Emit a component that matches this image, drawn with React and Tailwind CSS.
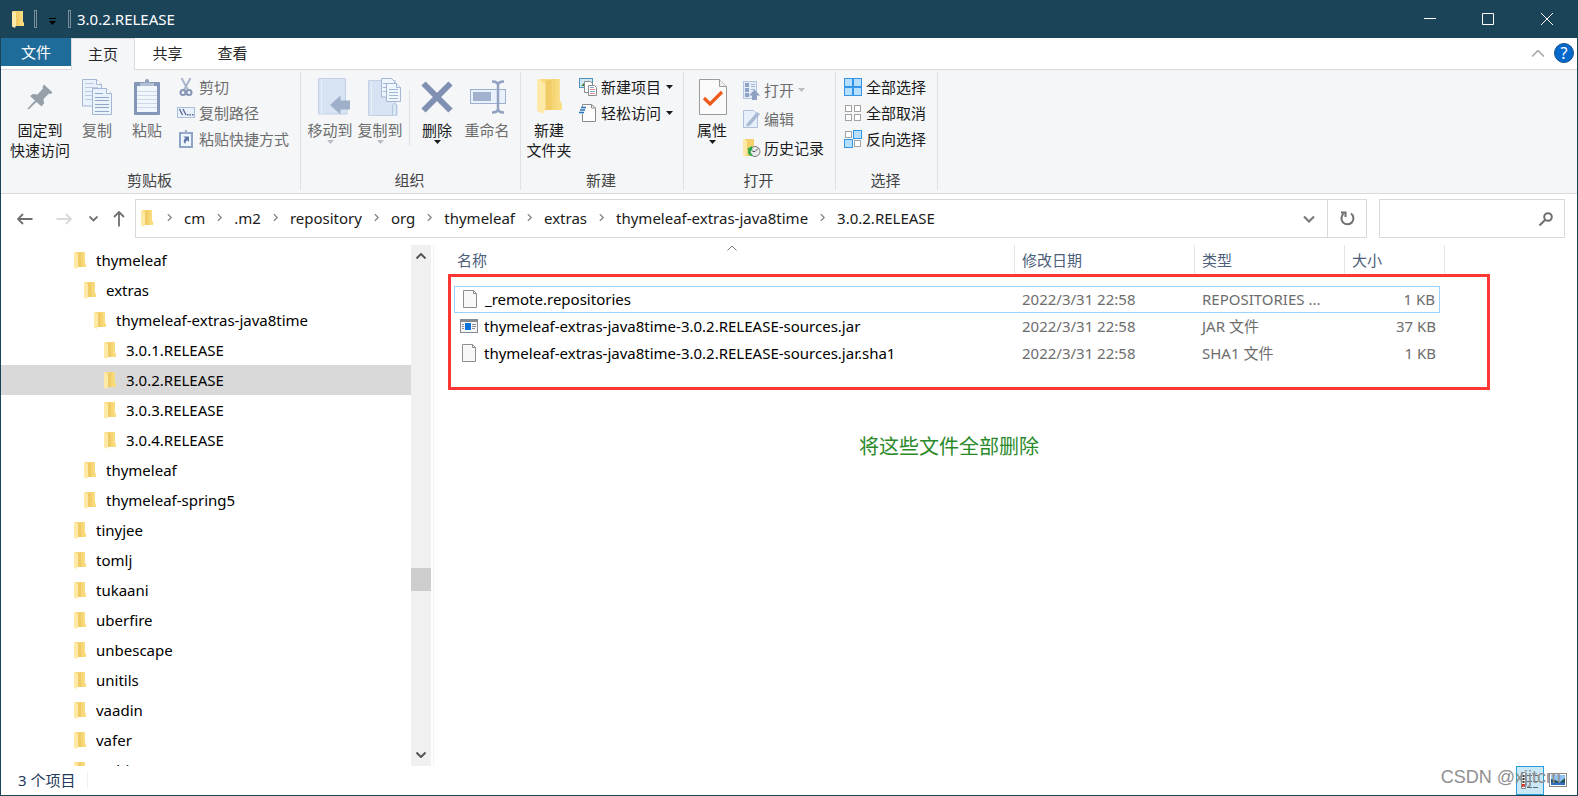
import { useState } from "react";

const TREE = [
  { name: "thymeleaf", level: 0 },
  { name: "extras", level: 1 },
  { name: "thymeleaf-extras-java8time", level: 2 },
  { name: "3.0.1.RELEASE", level: 3 },
  { name: "3.0.2.RELEASE", level: 3 },
  { name: "3.0.3.RELEASE", level: 3 },
  { name: "3.0.4.RELEASE", level: 3 },
  { name: "thymeleaf", level: 1 },
  { name: "thymeleaf-spring5", level: 1 },
  { name: "tinyjee", level: 0 },
  { name: "tomlj", level: 0 },
  { name: "tukaani", level: 0 },
  { name: "uberfire", level: 0 },
  { name: "unbescape", level: 0 },
  { name: "unitils", level: 0 },
  { name: "vaadin", level: 0 },
  { name: "vafer", level: 0 },
  { name: "webjars", level: 0 },
];

const INDENT = ["pl-[73px]", "pl-[83px]", "pl-[93px]", "pl-[103px]"];

const PATH = ["cm", ".m2", "repository", "org", "thymeleaf", "extras", "thymeleaf-extras-java8time", "3.0.2.RELEASE"];

const FILES = [
  { name: "_remote.repositories", date: "2022/3/31 22:58", type: "REPOSITORIES ...", size: "1 KB" },
  { name: "thymeleaf-extras-java8time-3.0.2.RELEASE-sources.jar", date: "2022/3/31 22:58", type: "JAR 文件", size: "37 KB", jar: true },
  { name: "thymeleaf-extras-java8time-3.0.2.RELEASE-sources.jar.sha1", date: "2022/3/31 22:58", type: "SHA1 文件", size: "1 KB" },
];

/* ---------- icons ---------- */

function FolderIcon({ className = "w-3 h-[17px]" }) {
  return (
    <svg viewBox="0 0 12 17" className={`shrink-0 ${className}`} aria-hidden="true">
      <path d="M1 0h10v10.500l1 1.500v3H3z" fill="#fadc80" />
      <path d="M4 1l4-1v15H4z" fill="#f0cb66" />
      <path d="M7 0h2v15H7z" fill="#f5d574" />
      <path d="M0 0l4 2.2v12L3 17l-3-1.6z" fill="#ffe9a6" />
    </svg>
  );
}

function Chevron({ className, d = "M1 1l4 4-4 4", viewBox = "0 0 6 10", width = 1.5 }) {
  return (
    <svg viewBox={viewBox} className={`shrink-0 ${className}`} fill="none" stroke="currentColor" strokeWidth={width} aria-hidden="true">
      <path d={d} />
    </svg>
  );
}

function Caret({ className = "" }) {
  return (
    <svg viewBox="0 0 7 4" className={`w-[7px] h-1 shrink-0 ${className}`} fill="currentColor" aria-hidden="true">
      <path d="M0 0h7L3.5 4z" />
    </svg>
  );
}

function PinIcon() {
  return (
    <svg viewBox="0 0 26 26" className="w-[26px] h-[26px]" aria-hidden="true">
      <path d="M17 .5l8.500 8-2 1.500-1.500-.5-5.500 5.500.5 4.500-2.500 3-5-4.500-8 7.500-1-1 7.500-8-5-4.500 3-2 4.500.5 5.500-6-.5-1.500z" fill="#95a0a8" />
    </svg>
  );
}

function CopyIcon() {
  return (
    <svg viewBox="0 0 30 36" className="w-[30px] h-9" fill="#eaf2fc" stroke="#a3b6d3" aria-hidden="true">
      <path d="M.5.500h14l5 5v21.500h-19z" />
      <path d="M14.500.500v5h5" fill="#fff" />
      <path d="M3 4.500h9M3 8.500h13M3 12.500h13M3 16.500h13M3 20.500h13" stroke="#bccbe2" />
      <path d="M10.500 9.500h14l5 5v21h-19z" />
      <path d="M24.500 9.500v5h5" fill="#fff" />
      <path d="M13 14.500h8M13 18.500h14M13 21.500h14M13 25.500h14M13 28.500h14M13 32.500h14" stroke="#8fa6c9" />
    </svg>
  );
}

function PasteIcon() {
  return (
    <svg viewBox="0 0 26 36" className="w-[26px] h-9" aria-hidden="true">
      <rect y="3" width="26" height="33" rx="1" fill="#8597b9" />
      <rect x="3" y="7" width="20" height="26" fill="#f1f6fd" />
      <path d="M3 12.500h20M3 16.500h20M3 20.500h20M3 24.500h20M3 28.500h20" stroke="#cdd9ea" />
      <path d="M6 7V4h4.500a2.500 2.500 0 015 0H20v3z" fill="#b3bfd2" />
      <circle cx="13" cy="2" r="2" fill="#8d9dba" />
    </svg>
  );
}

function CutIcon() {
  return (
    <svg viewBox="0 0 18 18" className="w-[18px] h-[18px] shrink-0" fill="none" aria-hidden="true">
      <path d="M4.500 0L11 12M13.500 0L7 12" stroke="#a9b6cb" strokeWidth="2" />
      <circle cx="6" cy="14.500" r="2.500" stroke="#8496b8" strokeWidth="2" />
      <circle cx="12" cy="14.500" r="2.500" stroke="#8496b8" strokeWidth="2" />
    </svg>
  );
}

function CopyPathIcon() {
  return (
    <svg viewBox="0 0 18 18" className="w-[18px] h-[18px] shrink-0" aria-hidden="true">
      <rect x=".5" y="3.500" width="17" height="10" fill="#e9f1fb" stroke="#a9bcd8" />
      <path d="M2.500 5l3 6M6 5l3 6" stroke="#54698f" strokeWidth="1.300" />
      <path d="M10 10h1.500v1.500H10zM12.500 10H14v1.500h-1.500zM15 10h1.500v1.500H15z" fill="#54698f" />
    </svg>
  );
}

function PasteShortcutIcon() {
  return (
    <svg viewBox="0 0 18 18" className="w-[18px] h-[18px] shrink-0" aria-hidden="true">
      <rect x="2" y="2" width="14" height="16" fill="#8ea3c6" />
      <rect x="4" y="4" width="10" height="12" fill="#eef5fd" />
      <path d="M6 3.500V2l2-.500V0h2v1.500l2 .500v1.500z" fill="#a5b3cb" />
      <path d="M6.500 6.500H12V12l-1.700-1.700C8.500 11.500 8.300 12.500 8.300 14 6 12 6.500 9.800 8.200 8.200z" fill="#5f7aa8" />
    </svg>
  );
}

function MoveToIcon() {
  return (
    <svg viewBox="0 0 33 37" className="ml-2 w-[33px] h-[37px]" aria-hidden="true">
      <path d="M.5.500h27v24h1.500v11.500H.5z" fill="#d7e3f3" stroke="#c2d1e8" />
      <path d="M3.500 1v35" stroke="#e6eef9" />
      <path d="M12 27l10.500-9.500v5H32v9h-9.500v5z" fill="#9fafca" />
    </svg>
  );
}

function CopyToIcon() {
  return (
    <svg viewBox="0 0 33 38" className="ml-2 w-[33px] h-[38px]" aria-hidden="true">
      <path d="M.5 2.500h27v24h1.500v11H.5z" fill="#d7e3f3" stroke="#c2d1e8" />
      <path d="M3.500 3v34" stroke="#e6eef9" />
      <path d="M24.500 37v-9c0-3 4-3 4 0v9" fill="#dbe6f5" stroke="#b7c8e2" />
      <g fill="#f0f6fd" stroke="#a3b6d3">
        <path d="M13.500.500h10l3 3v15.500h-13z" />
        <path d="M15 5.500h8M15 9.500h8M15 13.500h8" />
        <path d="M18.500 5.500h10l4 4v14h-14z" />
        <path d="M28.500 5.500v4h4M21 11.500h9M21 14.500h9M21 17.500h9M21 20.500h9" />
      </g>
    </svg>
  );
}

function DeleteIcon() {
  return (
    <svg viewBox="0 0 32 32" className="w-8 h-8" aria-hidden="true">
      <path d="M2.500 2.500l27 27M29.500 2.500l-27 27" stroke="#8090b2" strokeWidth="6" />
    </svg>
  );
}

function RenameIcon() {
  return (
    <svg viewBox="0 0 36 34" className="ml-0.5 w-9 h-[34px]" fill="none" aria-hidden="true">
      <rect x=".5" y="9.500" width="35" height="14" fill="#e9f1fc" stroke="#9db0d0" />
      <rect x="3" y="12" width="18" height="9" fill="#a2b1cd" />
      <path d="M22 1.500c4 0 6 1 6 4v23c0 3-2 4-6 4M34 1.500c-4 0-6 1-6 4v23c0 3 2 4 6 4" stroke="#92a2c0" strokeWidth="2.500" />
    </svg>
  );
}

function NewItemIcon() {
  return (
    <svg viewBox="0 0 18 18" className="w-[18px] h-[18px] shrink-0" aria-hidden="true">
      <rect x=".5" y=".5" width="13" height="9" fill="#cfe6f3" stroke="#4d94b8" />
      <path d="M2 8l3-3 3 3z" fill="#41813e" />
      <path d="M5.500 3.500h6l2 2v9h-8z" fill="#fff" stroke="#8b8b8b" />
      <path d="M9.500 7.500h6l2 2v8h-8z" fill="#fff" stroke="#8b8b8b" />
      <path d="M11 11.500h5M11 15.500h5" stroke="#e38e8e" />
      <path d="M11 9.500h4M11 13.500h5" stroke="#7fa9d8" />
    </svg>
  );
}

function EasyAccessIcon() {
  return (
    <svg viewBox="0 0 18 18" className="w-[18px] h-[18px] shrink-0" aria-hidden="true">
      <path d="M3.500.500h9l4 3.500v13.500h-13z" fill="#fdfdfd" stroke="#8b8b8b" />
      <path d="M12.500.500v3.500h4" fill="none" stroke="#8b8b8b" />
      <path d="M1 2.500h6v7H0z" fill="#f4f6f8" />
      <path d="M2 3.500h5M1 6h5M0 8.500h5" stroke="#2672b5" strokeWidth="1.500" />
    </svg>
  );
}

function PropertiesIcon() {
  return (
    <svg viewBox="0 0 28 36" className="ml-0.5 w-7 h-9" aria-hidden="true">
      <path d="M.5.500h20l7 7v28H.5z" fill="#fbfbfb" stroke="#9b9b9b" />
      <path d="M20.500.500v7h7" fill="#eee" stroke="#9b9b9b" />
      <path d="M5 19l6 6 12-12" fill="none" stroke="#ec5b1b" strokeWidth="3.200" />
    </svg>
  );
}

function OpenIcon() {
  return (
    <svg viewBox="0 0 18 20" className="w-[18px] h-5 shrink-0" aria-hidden="true">
      <rect x=".5" y="1.500" width="13" height="17" fill="#e3ecf8" stroke="#b4c5df" />
      <path d="M2 3h4v4H2zM2 8h4v4H2zM2 13h4v4H2z" fill="#8fa3c6" />
      <path d="M8 4.500h4M8 6.500h4M8 9.500h4" stroke="#a7b8d4" />
      <path d="M11.500 9.500l5.500 6h-3V20H9v-4.500H6z" fill="#8fa1c3" />
    </svg>
  );
}

function EditIcon() {
  return (
    <svg viewBox="0 0 18 18" className="w-[18px] h-[18px] shrink-0" aria-hidden="true">
      <path d="M.5.500h10l4 4v13H.5z" fill="#e6effa" stroke="#afc1dd" />
      <path d="M4 13.500L14 2l3 2-10 11.500-4 1z" fill="#a9b9d4" />
    </svg>
  );
}

function HistoryIcon() {
  return (
    <svg viewBox="0 0 18 18" className="w-[18px] h-[18px] shrink-0" aria-hidden="true">
      <path d="M2 0h9v17H2z" fill="#f3d06c" />
      <path d="M0 0l4 2v13l-1 3-3-2z" fill="#ffe9a6" />
      <circle cx="12" cy="12.500" r="5" fill="#e9e9e9" stroke="#7b7b7b" />
      <path d="M12 12.500l3-3M12 12.500H9.500" stroke="#555" />
      <path d="M9 17c-4-.5-4.500-4-3.500-6L4 10l5-3 .5 5-1.500-.800c-.8 1.800 0 3.800 2 5z" fill="#2fa84a" />
    </svg>
  );
}

// each flag marks one tile of the 2x2 grid as highlighted
function SelectIcon({ tiles }) {
  const spots = [[1, 1], [10, 1], [1, 10], [10, 10]];
  return (
    <svg viewBox="0 0 18 18" className="w-[18px] h-[18px] shrink-0" aria-hidden="true">
      {spots.map(([x, y], i) =>
        tiles[i] ? (
          <rect key={i} x={x - 0.5} y={y - 0.5} width="8" height="8" fill="#b5deff" stroke="#3595e6" />
        ) : (
          <rect key={i} x={x + 0.5} y={y + 0.5} width="6" height="6" fill="#fff" stroke="#a3a3a3" />
        )
      )}
    </svg>
  );
}

function FileIcon() {
  return (
    <svg viewBox="0 0 18 18" className="w-[18px] h-[18px] shrink-0" aria-hidden="true">
      <path d="M2.500.500h10l3 3v14h-13z" fill="#f8f8f8" stroke="#8e8e8e" />
      <path d="M12.500.500v3h3" fill="none" stroke="#8e8e8e" />
    </svg>
  );
}

function JarIcon() {
  return (
    <svg viewBox="0 0 18 18" className="w-[18px] h-[18px] shrink-0" aria-hidden="true">
      <rect x=".5" y="2.500" width="17" height="13" fill="#f5f5f5" stroke="#858b90" />
      <path d="M1 3h16v2H1z" fill="#858b90" />
      <path d="M5 6h6v7H5z" fill="#0b74da" />
      <path d="M2 7.500h2M2 9.500h2M2 11.500h2M12 7.500h4M12 9.500h4M12 11.500h3" stroke="#8b9095" />
    </svg>
  );
}

/* ---------- ribbon ---------- */

function BigButton({ icon, lines, disabled, caret, className = "w-[50px]" }) {
  return (
    <button className={`flex flex-col items-center shrink-0 pt-[3px] ${disabled ? "text-[#6d6d6d]" : "text-[#1b1b1b]"} ${className}`}>
      <span className="flex h-[43px] items-center pb-1">{icon}</span>
      {lines.map((line) => (
        <span key={line} className="leading-5 whitespace-nowrap">{line}</span>
      ))}
      {caret && <Caret className={disabled ? "text-[#b9bcc0]" : ""} />}
    </button>
  );
}

function SmallButton({ icon, label, disabled, caret, className = "h-[26px] gap-1" }) {
  return (
    <button className={`flex items-center whitespace-nowrap ${disabled ? "text-[#6d6d6d]" : "text-[#1b1b1b]"} ${className}`}>
      {icon}
      <span>{label}</span>
      {caret && <Caret className={`ml-px ${disabled ? "text-[#b9bcc0]" : ""}`} />}
    </button>
  );
}

function RibbonGroup({ label, className, indent, children }) {
  return (
    <section className={`flex flex-col justify-between shrink-0 border-r border-[#dfe1e4] pt-0.5 ${className}`}>
      <div className={`flex items-start ${indent}`}>{children}</div>
      <h2 className="pr-0.5 text-center leading-5 text-[#444]">{label}</h2>
    </section>
  );
}

function Ribbon() {
  return (
    <div className="flex h-[124px] shrink-0 overflow-hidden border-b border-[#d9dadb] bg-[#f4f6f8] pt-0.5 pb-[3px]">
      <RibbonGroup label="剪贴板" className="w-[300px]" indent="pl-[7px]">
        <BigButton className="w-16" icon={<PinIcon />} lines={["固定到", "快速访问"]} />
        <BigButton icon={<CopyIcon />} lines={["复制"]} disabled />
        <BigButton icon={<PasteIcon />} lines={["粘贴"]} disabled />
        <div className="ml-[5px]">
          <SmallButton icon={<CutIcon />} label="剪切" disabled />
          <SmallButton icon={<CopyPathIcon />} label="复制路径" disabled />
          <SmallButton icon={<PasteShortcutIcon />} label="粘贴快捷方式" disabled />
        </div>
      </RibbonGroup>
      <RibbonGroup label="组织" className="w-[220px]" indent="pl-1">
        <BigButton icon={<MoveToIcon />} lines={["移动到"]} disabled caret />
        <BigButton icon={<CopyToIcon />} lines={["复制到"]} disabled caret />
        <div className="ml-1 mr-0.5 mt-4 h-14 w-px bg-[#dfe1e4]" />
        <BigButton icon={<DeleteIcon />} lines={["删除"]} caret />
        <BigButton icon={<RenameIcon />} lines={["重命名"]} disabled />
      </RibbonGroup>
      <RibbonGroup label="新建" className="w-[163px]" indent="pl-[3px]">
        <BigButton icon={<FolderIcon className="ml-px w-[25px] h-[35px]" />} lines={["新建", "文件夹"]} />
        <div className="ml-[5px]">
          <SmallButton icon={<NewItemIcon />} label="新建项目" caret />
          <SmallButton icon={<EasyAccessIcon />} label="轻松访问" caret />
        </div>
      </RibbonGroup>
      <RibbonGroup label="打开" className="w-[152px]" indent="pl-[3px]">
        <BigButton icon={<PropertiesIcon />} lines={["属性"]} caret />
        <div className="ml-1.5 pt-px">
          <SmallButton className="h-[29px] gap-[3px]" icon={<OpenIcon />} label="打开" disabled caret />
          <SmallButton className="h-[29px] gap-[3px]" icon={<EditIcon />} label="编辑" disabled />
          <SmallButton className="h-[29px] gap-[3px]" icon={<HistoryIcon />} label="历史记录" />
        </div>
      </RibbonGroup>
      <RibbonGroup label="选择" className="w-[102px]" indent="pl-2">
        <div>
          <SmallButton icon={<SelectIcon tiles={[1, 1, 1, 1]} />} label="全部选择" />
          <SmallButton icon={<SelectIcon tiles={[0, 0, 0, 0]} />} label="全部取消" />
          <SmallButton icon={<SelectIcon tiles={[0, 1, 1, 0]} />} label="反向选择" />
        </div>
      </RibbonGroup>
    </div>
  );
}

/* ---------- window parts ---------- */

function TitleBar() {
  return (
    <header className="flex h-[38px] shrink-0 items-center bg-[#1c4459] pl-3 text-white">
      <FolderIcon />
      <span className="ml-2.5 h-[18px] w-[3px] border border-[#7a8f9b]" />
      <button aria-label="自定义快速访问工具栏" className="ml-3 flex flex-col items-center gap-0.5 pt-1 text-black">
        <span className="h-px w-[7px] bg-black" />
        <Caret />
      </button>
      <span className="ml-3 h-[18px] w-[3px] border border-[#7a8f9b]" />
      <h1 className="ml-1.5">3.0.2.RELEASE</h1>
      <div className="ml-auto flex h-full pr-px">
        <button aria-label="最小化" className="flex w-[58px] items-center justify-center">
          <svg viewBox="0 0 12 12" className="w-3 h-3" stroke="currentColor"><path d="M0 5.500h12" /></svg>
        </button>
        <button aria-label="最大化" className="flex w-[58px] items-center justify-center">
          <svg viewBox="0 0 12 12" className="w-3 h-3" fill="none" stroke="currentColor"><path d="M.5.500h11v11H.5z" /></svg>
        </button>
        <button aria-label="关闭" className="flex w-[60px] items-center justify-center">
          <svg viewBox="0 0 12 12" className="w-3 h-3" stroke="currentColor"><path d="M0 0l12 12M12 0L0 12" /></svg>
        </button>
      </div>
    </header>
  );
}

function Tabs() {
  return (
    <div className="flex h-8 shrink-0 items-stretch text-[#262626]">
      <div className="border-b border-[#d9dadb] pb-[3px]">
        <button className="h-7 w-[70px] bg-[#1f6c9b] text-white">文件</button>
      </div>
      <button className="w-16 border-x border-t border-[#d9dadb] bg-[#f4f6f8] pb-0.5">主页</button>
      <button className="w-[65px] border-b border-[#d9dadb] pb-px">共享</button>
      <button className="w-[65px] border-b border-[#d9dadb] pb-px">查看</button>
      <div className="flex flex-1 items-center justify-end gap-2.5 border-b border-[#d9dadb] pr-[3px] pb-px">
        <button aria-label="最小化功能区">
          <Chevron className="w-3 h-[7px] text-[#a5a5a5]" viewBox="0 0 12 7" d="M0 6.500l6-6 6 6" />
        </button>
        <button aria-label="帮助" className="h-5 w-5 rounded-full border border-[#14508a] bg-[#0668cd] text-base leading-[18px] text-white">?</button>
      </div>
    </div>
  );
}

function AddressBar() {
  return (
    <div className="flex h-[51px] shrink-0 items-start pt-[5px] pr-3">
      <div className="flex h-[39px] w-[134px] items-center pl-4 text-[#6f6f6f]">
        <button aria-label="返回">
          <Chevron className="w-4 h-3" viewBox="0 0 16 12" d="M15.500 6H1M6 1L1 6l5 5" width="1.800" />
        </button>
        <button aria-label="前进" className="ml-[23px] text-[#d9d9d9]">
          <Chevron className="w-4 h-3" viewBox="0 0 16 12" d="M.5 6H15M10 1l5 5-5 5" width="1.800" />
        </button>
        <button aria-label="最近浏览的位置" className="ml-[17px]">
          <Chevron className="w-[9px] h-1.5" viewBox="0 0 9 6" d="M.5.500l4 4 4-4" width="1.800" />
        </button>
        <button aria-label="向上" className="ml-[15px]">
          <Chevron className="w-3 h-4" viewBox="0 0 12 16" d="M6 15.500V1M1 6l5-5 5 5" width="1.800" />
        </button>
      </div>
      <nav aria-label="地址" className="flex h-[39px] flex-1 items-center border border-[#d9d9d9] pl-[5px]">
        <FolderIcon className="mr-0.5 w-3 h-[17px]" />
        {PATH.map((part) => (
          <span key={part} className="flex items-center pb-0.5">
            <Chevron className="mx-3 w-[5px] h-[9px] text-[#7b7b7b]" />
            <a href="#" className="whitespace-nowrap text-[#1a1a1a]">{part}</a>
          </span>
        ))}
        <button aria-label="以前的位置" className="ml-auto mr-3 flex h-full items-center">
          <Chevron className="w-3 h-2 text-[#7b7b7b]" viewBox="0 0 12 8" d="M1 1.500l5 5 5-5" width="2.200" />
        </button>
        <button aria-label="刷新" className="flex h-full w-[39px] items-center justify-center border-l border-[#d9d9d9]">
          <svg viewBox="0 0 15 15" className="w-[15px] h-[15px]" fill="none" stroke="#6f6f6f" strokeWidth="2" aria-hidden="true">
            <path d="M11 2.500a6 6 0 11-7.500.3M1 1.500h4.500v4.500" />
          </svg>
        </button>
      </nav>
      <label className="ml-3 flex h-[39px] w-[186px] items-center border border-[#d9d9d9] pr-[11px]">
        <input type="text" aria-label="搜索" className="min-w-0 flex-1 px-2 outline-none" />
        <svg viewBox="0 0 14 14" className="w-3.5 h-3.5" fill="none" stroke="#6f6f6f" strokeWidth="2" aria-hidden="true">
          <circle cx="9" cy="5" r="3.800" />
          <path d="M6 8l-5.500 5.500" />
        </svg>
      </label>
    </div>
  );
}

function FolderTree() {
  const [selected, setSelected] = useState(4);

  return (
    <div className="flex w-[430px] shrink-0">
      <ul className="flex-1 overflow-hidden">
        {TREE.map((item, index) => (
          <li key={index}>
            <button
              onClick={() => setSelected(index)}
              className={`flex h-[30px] w-full items-center gap-2.5 text-black ${INDENT[item.level]} ${selected === index ? "bg-[#d9d9d9]" : ""}`}
            >
              <FolderIcon />
              <span>{item.name}</span>
            </button>
          </li>
        ))}
      </ul>
      <div className="flex w-5 flex-col items-center bg-[#f0f0f0] py-2 text-[#555]">
        <Chevron className="w-2.5 h-1.5" viewBox="0 0 10 6" d="M.5 5.500L5 1l4.500 4.500" width="2" />
        <div className="flex-[301]" />
        <div className="h-[23px] w-full bg-[#cdcdcd]" />
        <div className="flex-[157]" />
        <Chevron className="w-2.5 h-1.5" viewBox="0 0 10 6" d="M.5.500L5 5 9.500.500" width="2" />
      </div>
    </div>
  );
}

function FileList() {
  return (
    <main className="relative ml-0.5 min-w-0 flex-1 overflow-hidden border-l border-[#f3f3f3] pl-5">
      <table className="w-[991px] table-fixed border-separate border-spacing-0 text-left">
        <thead className="text-[#4c607a]">
          <tr className="h-[30px]">
            <th className="border-r border-[#e5e5e5] pl-[3px] font-normal">名称</th>
            <th className="w-[180px] border-r border-[#e5e5e5] pl-[7px] font-normal">修改日期</th>
            <th className="w-[150px] border-r border-[#e5e5e5] pl-[7px] font-normal">类型</th>
            <th className="w-[95px] pl-[7px] font-normal">大小</th>
            <td className="w-[5px] border-r border-[#e5e5e5]" />
          </tr>
        </thead>
        <tbody className="text-[#6d6d6d] before:block before:h-[11px] before:content-['']">
          {FILES.map((file, index) => {
            const line = index === 0 ? "border-y border-[#99d1ff]" : "";
            return (
              <tr key={file.name} className="h-[27px]">
                <td className={`pb-0.5 pl-1.5 ${line} ${index === 0 ? "border-l" : ""}`}>
                  <span className="flex items-center gap-1.5 whitespace-nowrap text-black">
                    {file.jar ? <JarIcon /> : <FileIcon />}
                    {file.name}
                  </span>
                </td>
                <td className={`pb-0.5 pl-[7px] whitespace-nowrap ${line}`}>{file.date}</td>
                <td className={`pb-0.5 pl-[7px] whitespace-nowrap ${line}`}>{file.type}</td>
                <td className={`pr-1 pb-0.5 text-right whitespace-nowrap ${line} ${index === 0 ? "border-r" : ""}`}>{file.size}</td>
                <td />
              </tr>
            );
          })}
        </tbody>
      </table>
      <Chevron className="absolute top-0 left-[293px] w-2.5 h-1.5 text-[#777]" viewBox="0 0 10 6" d="M.5 5.500L5 1l4.500 4.500" width="1" />

      {/* 标注 */}
      <div className="pointer-events-none absolute top-[29px] left-[14px] h-[116px] w-[1042px] border-3 border-[#fe3735]" />
      <p className="absolute top-[188px] left-[425px] text-xl leading-7 whitespace-nowrap text-[#2a8a2a]">将这些文件全部删除</p>
    </main>
  );
}

function StatusBar() {
  return (
    <footer className="relative flex h-[29px] shrink-0 items-center pl-[17px] text-[#22395b]">
      <div className="pb-0.5">
        <span className="block border-r border-[#f0f0f0] pr-3 leading-4">3 个项目</span>
      </div>
      <div className="ml-auto flex h-full items-end gap-[5px] pr-2.5">
        <button aria-label="详细信息" className="flex h-[29px] w-7 items-center justify-center border border-[#26a0da] bg-[#cbe8f6]">
          <svg viewBox="0 0 18 18" className="w-[18px] h-[18px]" fill="none" aria-hidden="true">
            <path d="M.5.500h4v16h-4z" fill="#fff" stroke="#8c8c8c" />
            <path d="M2.500 3v8" stroke="#333" strokeDasharray="2 1" strokeWidth="2" />
            <path d="M1 12h3v3H1z" fill="#e0301e" />
            <path d="M6 3.500h5M12 3.500h5M6 9.500h5M12 9.500h5M6 15.500h5M12 15.500h5" stroke="#5c6a74" />
          </svg>
        </button>
        <button aria-label="大图标" className="mb-2">
          <svg viewBox="0 0 18 14" className="w-[18px] h-3.5" aria-hidden="true">
            <rect x=".5" y=".5" width="17" height="13" fill="#fff" stroke="#8c8c8c" />
            <path d="M2 2h14v10H2z" fill="#8fc4f5" />
            <path d="M2 6l4 1 5 2 5-4v5H2z" fill="#254f52" />
            <path d="M2 9.500h14V12H2z" fill="#2f6fc0" />
          </svg>
        </button>
      </div>
      <span className="absolute right-4 bottom-2 font-['Liberation_Sans',sans-serif] text-lg leading-5 text-[#8f8f8f]">CSDN @xjjtcm</span>
    </footer>
  );
}

export default function App() {
  return (
    <div className="flex h-screen flex-col overflow-hidden bg-[#1c4459] font-['Noto_Sans','Noto_Sans_CJK_SC',sans-serif] text-[15px] leading-5">
      <TitleBar />
      <div className="mx-px mb-px flex min-h-0 flex-1 flex-col bg-white">
        <Tabs />
        <Ribbon />
        <AddressBar />
        <div className="flex min-h-0 flex-1">
          <FolderTree />
          <FileList />
        </div>
        <StatusBar />
      </div>
    </div>
  );
}
